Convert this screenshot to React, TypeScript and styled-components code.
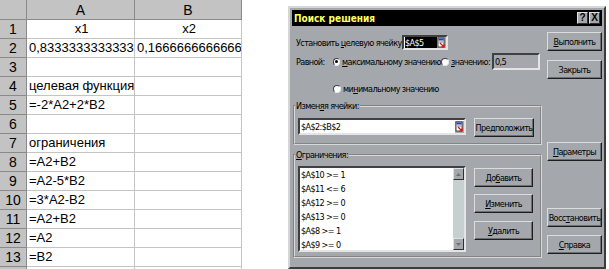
import React from 'react';
import styled, { createGlobalStyle, css } from 'styled-components';

const Global = createGlobalStyle`
  html, body { margin: 0; padding: 0; background: #ffffff; }
  body { width: 609px; height: 269px; overflow: hidden; }
`;

const Page = styled.div`
  display: flex;
  align-items: flex-start;
  width: 609px;
  height: 269px;
  overflow: hidden;
`;

/* ---------- spreadsheet ---------- */
const Sheet = styled.div`
  display: grid;
  grid-template-columns: 27px 108px 107px;
  grid-template-rows: 20px;
  grid-auto-rows: 19px;
  font-family: "Liberation Sans", Arial, sans-serif;
  font-size: 13px;
  color: #000;
`;

type CellKind = 'corner' | 'colhead' | 'rowhead' | 'cell';

const Cell = styled.div<{ $kind: CellKind; $align?: 'left' | 'center' }>`
  box-sizing: border-box;
  overflow: hidden;
  white-space: nowrap;
  display: flex;
  align-items: flex-end;
  padding: 0 0 1px 2px;
  line-height: 16px;
  justify-content: ${(p) => (p.$align === 'center' ? 'center' : 'flex-start')};
  ${(p) =>
    p.$kind === 'cell'
      ? css`
          background: #ffffff;
          border-right: 1px solid #c4c4c4;
          border-bottom: 1px solid #c4c4c4;
        `
      : css`
          background: #c3c3c3;
          border-right: 1px solid #8a8a8a;
          border-bottom: 1px solid #8a8a8a;
          justify-content: center;
          padding: 0 0 1px 0;
          font-size: 14px;
        `}
`;

/* ---------- dialog ---------- */
const Dialog = styled.div`
  box-sizing: border-box;
  margin-left: 46px;
  margin-top: 6px;
  width: 318px;
  height: 263px;
  background: #a4a8ac;
  border: 2px solid;
  border-color: #d6d6d6 #3c3c3c #3c3c3c #d6d6d6;
  padding: 2px;
  display: flex;
  flex-direction: column;
  font-family: "DejaVu Sans Condensed", "Liberation Sans", sans-serif;
  font-stretch: condensed;
  font-size: 9px;
  letter-spacing: -0.6px;
  color: #000;
`;

const TitleBar = styled.div`
  height: 16px;
  background: #000;
  display: flex;
  align-items: center;
  padding: 0 2px 0 2px;
  gap: 1px;
`;

const Title = styled.div`
  flex: 1;
  color: #ffff66;
  font-weight: bold;
  font-size: 10px;
  letter-spacing: 0;
`;

const TitleButton = styled.div`
  box-sizing: border-box;
  width: 11px;
  height: 12px;
  background: #a4a8ac;
  border: 1px solid;
  border-color: #e0e0e0 #303030 #303030 #e0e0e0;
  display: flex;
  align-items: center;
  justify-content: center;
  font-family: "Liberation Sans", sans-serif;
  font-weight: bold;
  font-size: 10px;
  letter-spacing: 0;
  line-height: 1;
`;

const Body = styled.div`
  display: flex;
  gap: 5px;
  padding-left: 1px;
`;

const LeftCol = styled.div`
  width: 250px;
  display: flex;
  flex-direction: column;
`;

const RightCol = styled.div`
  width: 55px;
  display: flex;
  flex-direction: column;
`;

const Row = styled.div<{ $mt: number; $h: number; $pl?: number }>`
  display: flex;
  align-items: center;
  margin-top: ${(p) => p.$mt}px;
  height: ${(p) => p.$h}px;
  padding-left: ${(p) => p.$pl ?? 3}px;
`;

const Label = styled.span<{ $w?: number }>`
  white-space: nowrap;
  flex-shrink: 0;
  ${(p) => (p.$w ? `width: ${p.$w}px;` : '')}
`;

const U = styled.span`
  text-decoration: underline;
`;

const RadioWrap = styled.span<{ $w?: number }>`
  display: inline-flex;
  align-items: center;
  gap: 2px;
  flex-shrink: 0;
  ${(p) => (p.$w ? `width: ${p.$w}px;` : '')}
  white-space: nowrap;
`;

const RadioDot = styled.span<{ $on?: boolean }>`
  box-sizing: border-box;
  width: 8px;
  height: 8px;
  border-radius: 50%;
  background: #fff;
  border: 1px solid;
  border-color: #404040 #e8e8e8 #e8e8e8 #404040;
  display: inline-flex;
  align-items: center;
  justify-content: center;
  &::after {
    content: '';
    width: 3px;
    height: 3px;
    border-radius: 50%;
    background: ${(p) => (p.$on ? '#000' : 'transparent')};
  }
`;

const Field = styled.div<{ $w: number; $h: number; $bg: string; $ml?: number }>`
  box-sizing: border-box;
  width: ${(p) => p.$w}px;
  height: ${(p) => p.$h}px;
  margin-left: ${(p) => p.$ml ?? 0}px;
  background: ${(p) => p.$bg};
  border: 2px solid;
  border-color: #404040 #e4e4e4 #e4e4e4 #404040;
  display: flex;
  align-items: center;
  padding-left: 1px;
  white-space: nowrap;
  overflow: hidden;
  flex-shrink: 0;
`;

const Selected = styled.span`
  flex: 1;
  align-self: stretch;
  display: flex;
  align-items: center;
  background: #000;
  color: #fff;
`;

const FieldText = styled.span`
  flex: 1;
`;

const Btn = styled.div<{ $w: number; $mt?: number }>`
  box-sizing: border-box;
  width: ${(p) => p.$w}px;
  height: 19px;
  margin-top: ${(p) => p.$mt ?? 0}px;
  background: #a4a8ac;
  border: 1px solid;
  border-color: #dcdcdc #1e1e1e #1e1e1e #dcdcdc;
  box-shadow: inset -1px -1px 0 #6c6f72;
  display: flex;
  align-items: center;
  justify-content: center;
  white-space: nowrap;
  flex-shrink: 0;
`;

const Group = styled.fieldset<{ $mt: number }>`
  margin: ${(p) => p.$mt}px 0 0 0;
  padding: 0;
  border: 2px groove #d8d8d8;
  min-width: 0;
`;

const Legend = styled.legend`
  padding: 0 1px;
  margin-left: 0;
  line-height: 12px;
  height: 12px;
`;

const GroupInner = styled.div<{ $pt: number; $pb: number }>`
  display: flex;
  gap: 8px;
  padding: ${(p) => p.$pt}px 0 ${(p) => p.$pb}px 3px;
  align-items: flex-start;
`;

const ListBox = styled.div`
  box-sizing: border-box;
  width: 168px;
  height: 86px;
  background: #fff;
  border: 2px solid;
  border-color: #404040 #e4e4e4 #e4e4e4 #404040;
  display: flex;
`;

const ListItems = styled.div`
  flex: 1;
  padding-left: 1px;
  display: flex;
  flex-direction: column;
`;

const ListItem = styled.div`
  height: 14px;
  line-height: 14px;
  white-space: nowrap;
`;

const ScrollBar = styled.div`
  width: 11px;
  background: #c6d0d0;
  display: flex;
  flex-direction: column;
  justify-content: space-between;
`;

const ScrollBtn = styled.div`
  box-sizing: border-box;
  height: 12px;
  background: #a4a8ac;
  border: 1px solid;
  border-color: #e0e0e0 #303030 #303030 #e0e0e0;
  display: flex;
  align-items: center;
  justify-content: center;
`;

const BtnStack = styled.div`
  display: flex;
  flex-direction: column;
  padding-top: 2px;
`;

const RefIcon = () => (
  <svg width="9" height="12" viewBox="0 0 9 12" style={{ flexShrink: 0, display: 'block' }}>
    <rect x="0" y="0" width="9" height="12" fill="#a4a8ac" />
    <rect x="1" y="1" width="6" height="9" fill="#ffffff" stroke="#202020" strokeWidth="0.8" />
    <rect x="1.5" y="1.5" width="5" height="2" fill="#2040c0" />
    <line x1="2" y1="5" x2="6" y2="5" stroke="#606060" strokeWidth="0.8" />
    <path d="M3 6 L7 10 M7 7.5 L7 10 L4.5 10" stroke="#e01010" strokeWidth="1.2" fill="none" />
  </svg>
);

const Tri = ({ up }: { up?: boolean }) => (
  <svg width="5" height="3" viewBox="0 0 5 3" style={{ display: 'block' }}>
    <path d={up ? 'M0 3 L2.5 0 L5 3 Z' : 'M0 0 L2.5 3 L5 0 Z'} fill="#707070" />
  </svg>
);

const colA = ['x1', '0,8333333333333333', '', 'целевая функция', '=-2*A2+2*B2', '', 'ограничения', '=A2+B2', '=A2-5*B2', '=3*A2-B2', '=A2+B2', '=A2', '=B2', ''];
const colB = ['x2', '0,1666666666666667', '', '', '', '', '', '', '', '', '', '', '', ''];

const constraints = ['$A$10 >= 1', '$A$11 <= 6', '$A$12 >= 0', '$A$13 >= 0', '$A$8 >= 1', '$A$9 >= 0'];

export default function App() {
  return (
    <>
      <Global />
      <Page>
        <Sheet>
          <Cell $kind="corner" />
          <Cell $kind="colhead">A</Cell>
          <Cell $kind="colhead">B</Cell>
          {colA.map((a, i) => (
            <React.Fragment key={i}>
              <Cell $kind="rowhead">{i + 1}</Cell>
              <Cell $kind="cell" $align={i === 0 ? 'center' : 'left'}>{a}</Cell>
              <Cell $kind="cell" $align={i === 0 ? 'center' : 'left'}>{colB[i]}</Cell>
            </React.Fragment>
          ))}
        </Sheet>

        <Dialog>
          <TitleBar>
            <Title>Поиск решения</Title>
            <TitleButton>?</TitleButton>
            <TitleButton>X</TitleButton>
          </TitleBar>
          <Body>
            <LeftCol>
              <Row $mt={9} $h={15}>
                <Label $w={106}>Установить <U>ц</U>елевую ячейку:</Label>
                <Field $w={46} $h={15} $bg="#ffffff">
                  <Selected>$A$5</Selected>
                  <RefIcon />
                </Field>
              </Row>
              <Row $mt={3} $h={17}>
                <Label $w={37}>Равной:</Label>
                <RadioWrap $w={108}>
                  <RadioDot $on />
                  <span><U>м</U>аксимальному значению</span>
                </RadioWrap>
                <RadioWrap $w={51}>
                  <RadioDot />
                  <span><U>з</U>начению:</span>
                </RadioWrap>
                <Field $w={48} $h={17} $bg="#a4a8ac">
                  <FieldText>0,5</FieldText>
                </Field>
              </Row>
              <Row $mt={12} $h={14} $pl={40}>
                <RadioWrap>
                  <RadioDot />
                  <span>ми<U>н</U>имальному значению</span>
                </RadioWrap>
              </Row>
              <Group $mt={4}>
                <Legend>Измен<U>я</U>я ячейки:</Legend>
                <GroupInner $pt={6} $pb={6}>
                  <Field $w={168} $h={17} $bg="#ffffff">
                    <FieldText>$A$2:$B$2</FieldText>
                    <RefIcon />
                  </Field>
                  <Btn $w={60}>Предположить</Btn>
                </GroupInner>
              </Group>
              <Group $mt={4}>
                <Legend><U>О</U>граничения:</Legend>
                <GroupInner $pt={5} $pb={4}>
                  <ListBox>
                    <ListItems>
                      {constraints.map((c) => (
                        <ListItem key={c}>{c}</ListItem>
                      ))}
                    </ListItems>
                    <ScrollBar>
                      <ScrollBtn><Tri up /></ScrollBtn>
                      <ScrollBtn><Tri /></ScrollBtn>
                    </ScrollBar>
                  </ListBox>
                  <BtnStack>
                    <Btn $w={59}>До<U>б</U>авить</Btn>
                    <Btn $w={59} $mt={7}><U>И</U>зменить</Btn>
                    <Btn $w={59} $mt={8}><U>У</U>далить</Btn>
                  </BtnStack>
                </GroupInner>
              </Group>
            </LeftCol>
            <RightCol>
              <Btn $w={55} $mt={6}><U>В</U>ыполнить</Btn>
              <Btn $w={55} $mt={9}>Закрыть</Btn>
              <Btn $w={55} $mt={63}><U>П</U>араметры</Btn>
              <Btn $w={55} $mt={47}>Восс<U>т</U>ановить</Btn>
              <Btn $w={55} $mt={8}><U>С</U>правка</Btn>
            </RightCol>
          </Body>
        </Dialog>
      </Page>
    </>
  );
}
